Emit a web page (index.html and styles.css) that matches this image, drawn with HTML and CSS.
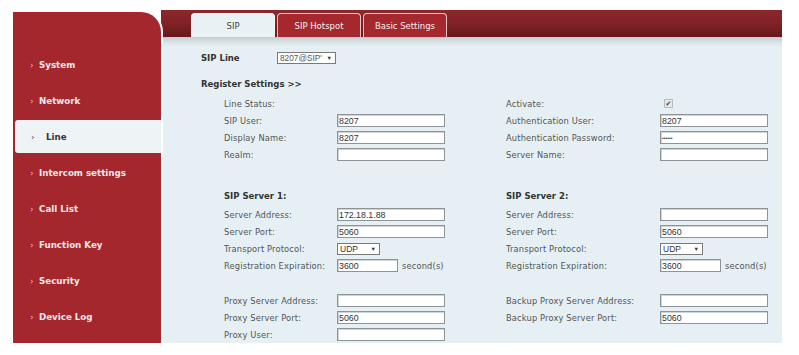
FILE: index.html
```html
<!DOCTYPE html>
<html>
<head>
<meta charset="utf-8">
<link rel="stylesheet" href="styles.css">
</head>
<body>
<div class="page">
  <aside class="sidebar">
    <ul class="menu">
      <li class="item"><span class="arr">›</span>System</li>
      <li class="item"><span class="arr">›</span>Network</li>
      <li class="item active"><span class="arr">›</span>Line</li>
      <li class="item"><span class="arr">›</span>Intercom settings</li>
      <li class="item"><span class="arr">›</span>Call List</li>
      <li class="item"><span class="arr">›</span>Function Key</li>
      <li class="item"><span class="arr">›</span>Security</li>
      <li class="item"><span class="arr">›</span>Device Log</li>
    </ul>
  </aside>
  <main class="main">
    <div class="topbar">
      <nav class="tabs">
        <span class="tab active">SIP</span>
        <span class="tab">SIP Hotspot</span>
        <span class="tab">Basic Settings</span>
      </nav>
    </div>
    <div class="content">
      <div class="line-row">
        <span class="bold line-label">SIP Line</span>
        <span class="select line-select">8207@SIP'<span class="caret">▼</span></span>
      </div>
      <div class="bold reg-title">Register Settings &gt;&gt;</div>

      <div class="form sec1">
        <span class="lbl">Line Status:</span><span></span>
        <span class="lbl">Activate:</span><span class="cell"><span class="check">✔</span></span>

        <span class="lbl">SIP User:</span><span class="cell"><span class="input">8207</span></span>
        <span class="lbl">Authentication User:</span><span class="cell"><span class="input">8207</span></span>

        <span class="lbl">Display Name:</span><span class="cell"><span class="input">8207</span></span>
        <span class="lbl">Authentication Password:</span><span class="cell"><span class="input pw">••••••</span></span>

        <span class="lbl">Realm:</span><span class="cell"><span class="input"></span></span>
        <span class="lbl">Server Name:</span><span class="cell"><span class="input"></span></span>
      </div>

      <div class="form sec2">
        <span class="bold head">SIP Server 1:</span>
        <span class="bold head">SIP Server 2:</span>

        <span class="lbl">Server Address:</span><span class="cell"><span class="input">172.18.1.88</span></span>
        <span class="lbl">Server Address:</span><span class="cell"><span class="input"></span></span>

        <span class="lbl">Server Port:</span><span class="cell"><span class="input">5060</span></span>
        <span class="lbl">Server Port:</span><span class="cell"><span class="input">5060</span></span>

        <span class="lbl">Transport Protocol:</span><span class="cell"><span class="select udp">UDP<span class="caret">▼</span></span></span>
        <span class="lbl">Transport Protocol:</span><span class="cell"><span class="select udp">UDP<span class="caret">▼</span></span></span>

        <span class="lbl">Registration Expiration:</span><span class="cell"><span class="input short">3600</span><span class="unit">second(s)</span></span>
        <span class="lbl">Registration Expiration:</span><span class="cell"><span class="input short">3600</span><span class="unit">second(s)</span></span>
      </div>

      <div class="form sec3">
        <span class="lbl">Proxy Server Address:</span><span class="cell"><span class="input"></span></span>
        <span class="lbl">Backup Proxy Server Address:</span><span class="cell"><span class="input"></span></span>

        <span class="lbl">Proxy Server Port:</span><span class="cell"><span class="input">5060</span></span>
        <span class="lbl">Backup Proxy Server Port:</span><span class="cell"><span class="input">5060</span></span>

        <span class="lbl">Proxy User:</span><span class="cell"><span class="input"></span></span>
      </div>
    </div>
  </main>
</div>
</body>
</html>
```

FILE: styles.css
```css
* { box-sizing: border-box; }
html, body { margin: 0; padding: 0; background: #ffffff; }
body { font-family: "DejaVu Sans", Verdana, sans-serif; }

.page {
  display: flex;
  padding: 10px 0 0 13px;
  width: 782px;
}

.sidebar {
  width: 150px;
  height: 333px;
  background: #a3272d;
  border-top-right-radius: 22px;
  border-right: 2px solid #ffffff;
  border-top: 2px solid #ffffff;
  position: relative;
  z-index: 2;
  flex: none;
}
.menu {
  list-style: none;
  margin: 0;
  padding: 35px 0 0 0;
}
.item {
  height: 36px;
  display: flex;
  align-items: center;
  padding-left: 17px;
  color: #f6eaea;
  font-weight: bold;
  font-size: 8.7px;
}
.arr {
  width: 9px;
  font-size: 9px;
  color: #f0b8b8;
  font-weight: normal;
}
.item.active {
  background: #eef3f6;
  margin: 1px 0 2px 2px;
  height: 33px;
  border-radius: 3px 0 0 3px;
  color: #333;
  padding-left: 16px;
}
.item.active .arr {
  color: #555;
  width: 15px;
}

.main {
  flex: 1;
  display: flex;
  flex-direction: column;
  margin-left: -2px;
}
.topbar {
  height: 27px;
  background: linear-gradient(#8c272b 0%, #7e2125 55%, #65191c 100%);
  padding: 3px 0 0 30px;
}
.tabs {
  display: flex;
  gap: 2px;
  height: 25px;
}
.tab {
  width: 84px;
  height: 25px;
  display: flex;
  align-items: center;
  justify-content: center;
  background: #a4282d;
  color: #f7eded;
  border: 1px solid #e6c4c6;
  border-bottom: none;
  border-radius: 4px 4px 0 0;
  font-size: 8.5px;
}
.tab.active {
  background: #e9f1f4;
  color: #444;
  border-color: #f4f7f8;
}

.content {
  height: 306px;
  background: linear-gradient(#c4ccd2 0px, #dde6ea 6px, #e6eff3 10px, #e6eff3 100%);
  padding: 12px 0 0 40px;
  font-size: 8.3px;
  letter-spacing: 0.15px;
  color: #555;
}
.bold { font-weight: bold; color: #333; font-size: 8.5px; letter-spacing: 0; }

.line-row {
  height: 17px;
  display: flex;
  align-items: center;
}
.line-label { width: 76px; }
.select {
  display: inline-flex;
  align-items: center;
  justify-content: space-between;
  height: 12px;
  background: #fff;
  border: 1px solid #7a7a7a;
  padding: 0 3px 0 2px;
  font-size: 8.5px;
  letter-spacing: 0;
  color: #333;
}
.line-select {
  width: 59px;
  font-family: "Liberation Sans", Arial, sans-serif;
  font-size: 8.3px;
  color: #555;
}
.caret { font-size: 5.5px; color: #333; }
.reg-title { margin-top: 9px; height: 17px; display: flex; align-items: center; }

.form {
  display: grid;
  grid-template-columns: 113px 169px 154px 1fr;
  grid-auto-rows: 17px;
  align-items: center;
  margin-left: 23px;
}
.sec1 { margin-top: 3px; }
.sec2 { margin-top: 22px; grid-template-rows: 21px; }
.sec3 { margin-top: 18px; }
.head { grid-column: span 2; }
.cell { display: flex; align-items: center; }
.input {
  display: inline-flex;
  align-items: center;
  width: 108px;
  height: 13px;
  background: #fff;
  border: 1px solid #8d9498;
  box-shadow: inset 1px 1px 0 #d0d4d6;
  padding-left: 1px;
  color: #333;
  font-size: 8.8px;
  letter-spacing: 0;
  font-family: "Liberation Sans", Arial, sans-serif;
}
.input.short { width: 61px; }
.input.pw { font-size: 5px; letter-spacing: 0; }
.unit { margin-left: 4px; }
.udp { width: 43px; font-family: "Liberation Sans", Arial, sans-serif; }
.check {
  margin-left: 4px;
  width: 9px;
  height: 9px;
  font-size: 7px;
  line-height: 9px;
  text-align: center;
  color: #444;
  background: #e4e8ea;
  border: 1px solid #b8bcbe;
}
```
